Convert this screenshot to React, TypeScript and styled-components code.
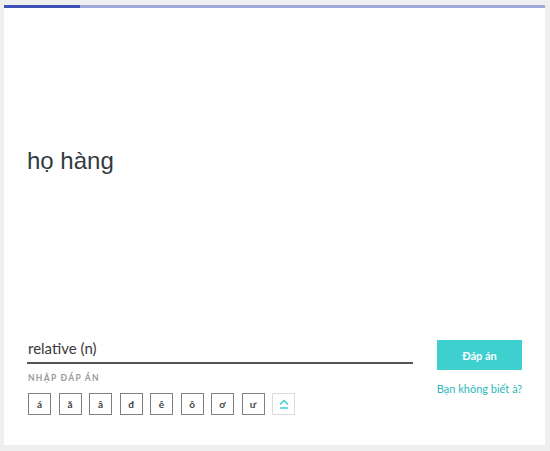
import React from "react";
import styled, { createGlobalStyle } from "styled-components";

const GlobalStyles = createGlobalStyle`
  * {
    box-sizing: border-box;
  }
  body {
    margin: 0;
    padding: 0;
    background: #efefef;
    font-family: Lato, 'Open Sans', sans-serif;
  }
`;

const Page = styled.div`
  padding: 5px 5px 6px 4px;
`;

const Card = styled.div`
  background: #fff;
  height: 440px;
  display: flex;
  flex-direction: column;
`;

const Progress = styled.div`
  height: 3px;
  background: #9fa8da;
  display: flex;
`;

const ProgressFill = styled.div`
  background: #3f51b5;
  height: 100%;
`;

const Question = styled.div`
  flex: 1;
  padding: 139px 23px 0;
`;

const Word = styled.h1`
  margin: 0;
  font-family: "Liberation Sans", Arial, sans-serif;
  font-weight: 400;
  font-size: 24px;
  line-height: 28px;
  color: #333b3f;
`;

const AnswerRow = styled.div`
  display: flex;
  justify-content: space-between;
  padding: 0 23px 30px;
`;

const InputColumn = styled.div`
  width: 386px;
  display: flex;
  flex-direction: column;
`;

const Input = styled.div`
  font-size: 15px;
  color: #3a3a3a;
  padding: 2px 0 4px 1px;
  line-height: 20px;
  border-bottom: 2px solid #555;
`;

const Label = styled.div`
  margin-top: 9px;
  font-size: 8.5px;
  font-weight: 700;
  letter-spacing: 1.3px;
  color: #999;
  padding-left: 1px;
`;

const Keys = styled.div`
  display: flex;
  gap: 7.5px;
  margin-top: 10px;
  padding-left: 1px;
`;

const Key = styled.div<{ $special?: boolean }>`
  width: 23px;
  height: 22px;
  border: 1.5px solid ${(p) => (p.$special ? "#d8dcdc" : "#808080")};
  background: #fff;
  display: flex;
  align-items: center;
  justify-content: center;
  font-size: 10px;
  font-weight: 700;
  color: #444;
`;

const Side = styled.div`
  width: 85px;
  display: flex;
  flex-direction: column;
  align-items: center;
`;

const Button = styled.button`
  margin-top: 4px;
  width: 85px;
  height: 30px;
  border: none;
  background: #3ecfcf;
  color: #fff;
  font-family: Lato, sans-serif;
  font-weight: 700;
  font-size: 11px;
`;

const Hint = styled.a`
  margin-top: 12px;
  font-size: 11px;
  color: #2eb8b8;
  white-space: nowrap;
`;

const keys = ["á", "ă", "â", "đ", "ê", "ô", "ơ", "ư"];

const ShiftIcon = () => (
  <svg width="12" height="12" viewBox="0 0 12 12">
    <path d="M2 6.5 L6 2.5 L10 6.5" fill="none" stroke="#3ecfcf" strokeWidth="1.5" />
    <path d="M2 10 H10" stroke="#3ecfcf" strokeWidth="1.5" />
  </svg>
);

export default function App() {
  return (
    <Page>
      <GlobalStyles />
      <Card>
        <Progress>
          <ProgressFill style={{ width: `${(76 / 541) * 100}%` }} />
        </Progress>
        <Question>
          <Word>họ hàng</Word>
        </Question>
        <AnswerRow>
          <InputColumn>
            <Input>relative (n)</Input>
            <Label>NHẬP ĐÁP ÁN</Label>
            <Keys>
              {keys.map((k) => (
                <Key key={k}>{k}</Key>
              ))}
              <Key $special>
                <ShiftIcon />
              </Key>
            </Keys>
          </InputColumn>
          <Side>
            <Button>Đáp án</Button>
            <Hint>Bạn không biết à?</Hint>
          </Side>
        </AnswerRow>
      </Card>
    </Page>
  );
}
